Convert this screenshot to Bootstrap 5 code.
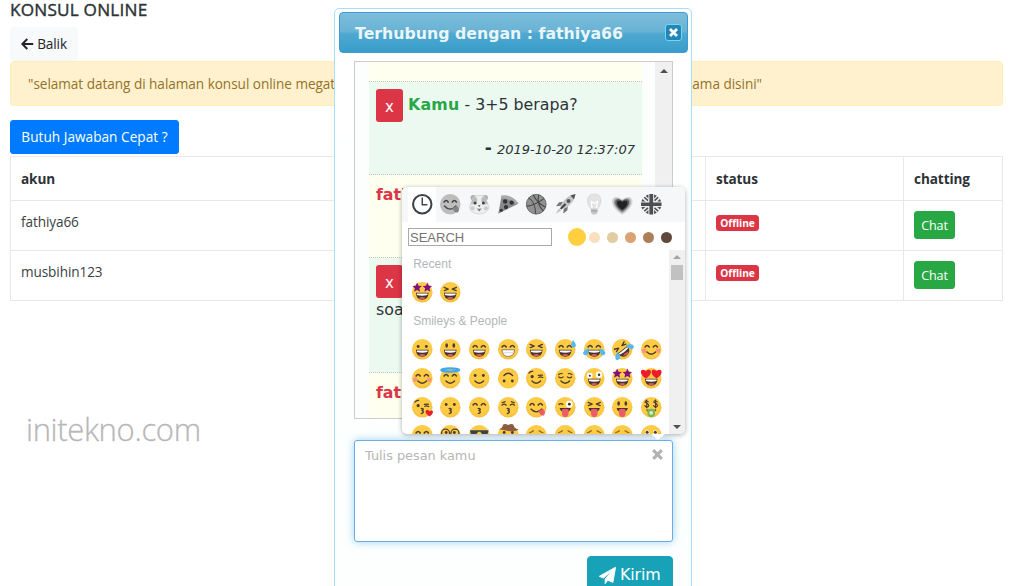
<!DOCTYPE html>
<html lang="id">
<head>
<meta charset="utf-8">
<meta name="viewport" content="width=device-width, initial-scale=1">
<title>Konsul Online</title>
<link href="https://cdn.jsdelivr.net/npm/bootstrap@5.3.0/dist/css/bootstrap.min.css" rel="stylesheet">
<style>
html{font-size:14.4px}
body{font-family:"Open Sans","Noto Sans",sans-serif;font-size:13.6px;line-height:21.6px;color:#2d3236;height:586px;overflow:hidden;position:relative;background:#fff}
.page{padding:0 21px 0 10px}
.page h1{font-size:17.2px;font-weight:500;line-height:21.6px;margin:-1px 0 6px;letter-spacing:.2px;-webkit-text-stroke:.4px}
.btn{font-size:13.6px;line-height:21.6px;padding:5.2px 10px;border-radius:3px;letter-spacing:-.1px}
.btn-back{background:#f8f9fa;border-color:#f8f9fa;width:68px;height:34px;white-space:nowrap}
.btn-ask{background:#007bff;border-color:#007bff;color:#fff;width:169px;height:34px;white-space:nowrap;letter-spacing:.04px}
.notice{background:#fff1cd;border:1px solid #ffeeba;color:#94722a;border-radius:4px;padding:11px 17px 10.4px;height:45px;margin-bottom:14px;white-space:nowrap;letter-spacing:-.04px}
.notice span:last-child{margin-right:223px}
.users{margin:2px 0 0;width:993px;table-layout:fixed;border-color:#e6e9ec;color:#2d3236}
.users th,.users td{padding:11px 10px 10px;line-height:21.6px;letter-spacing:-.1px}
.users td{color:#3a3f43;padding-top:10.5px}
.users thead tr{height:44px}.users tbody tr{height:50px}
.users .tag{display:block;width:43px;height:16px;border-radius:3.5px;background:#dc3545;color:#fff;font-weight:700;font-size:10.2px;line-height:16px;text-align:center;margin-top:4px;letter-spacing:-.05px}
.btn-chat{background:#28a745;border-color:#28a745;color:#fff;font-size:12.6px;line-height:18px;width:41px;height:28px;padding:5px 0 3px;border-radius:3px;display:block}
.watermark{font-size:31px;line-height:40px;font-weight:300;color:#b7b7b7;margin:108px 0 0 16px;letter-spacing:-.35px;-webkit-text-stroke:.3px}
.dialog{position:absolute;left:334px;top:8px;width:358px;height:600px;border:1.5px solid #a3e1f8;border-radius:5px;background:linear-gradient(#fff,#fcfffe);padding:3px 3px 3px 4px;font-family:"DejaVu Sans",sans-serif}
.dialog-head{height:41px;border:1px solid #4297d7;border-radius:4px;background:linear-gradient(#7dbedb 0,#68b2d4 48%,#4fa9d0 52%,#389dc9 100%);color:#eaf5f7;font-weight:700;font-size:15.75px;padding:0 5px 0 15px}
.dialog-head>span:first-child{padding-top:3px}
.dialog-close{width:17px;height:17px;border:1px solid #77d5f7;border-radius:3px;background:#2287b6}
.dialog-body{padding:8px 15px 0 15px}
.chat-log{height:358px;border:1px solid #ccc;padding-left:14px;overflow:hidden;background:#fcfefe}
.msgs{width:273px;font-size:15.8px;line-height:23px}
.msg{padding:7px;border-bottom:1px dotted #bfc3bd;position:relative;white-space:nowrap;overflow:hidden}
.msg.them{padding-top:8px}
.them{background:#fffff0}.mine{background:#ebf9f0}
.them b{color:#dc3545}.mine b{color:#28a745}
.btn-del{width:27px;height:33px;background:#dc3545;color:#fff;border-radius:3px;font-size:15px;display:inline-flex;align-items:center;justify-content:center;padding-top:2px;line-height:20px;vertical-align:-2px}
.btn-del+b{letter-spacing:.2px}
.stamp{text-align:right;font-size:13px;margin-top:15px}
.stamp span{font-size:17px;margin-right:1px;font-weight:700}
.sbar{width:17px;background:#f0f0f0}
.composer{margin-top:21px;height:102px;border:1px solid #66afe9;border-radius:3px;background:#fff;box-shadow:0 0 8px rgba(102,175,233,.6);padding:4px 9px 0 10px;font-size:12.85px;color:#b6b6b6}
.btn-send{background:#17a2b8;border-color:#17a2b8;color:#fff;width:86px;height:38px;margin-top:14px;font-size:15.9px;padding:0;border-radius:4px}
.picker{position:absolute;left:402px;top:187px;width:283px;height:247px;background:#fff;border-radius:5px;box-shadow:0 1px 5px rgba(0,0,0,.32);font-family:"Liberation Sans",sans-serif}
.picker:after{content:"";position:absolute;left:249px;top:247px;border:7px solid transparent;border-top:6px solid #fff;border-bottom:0}
.tabs{height:35px;background:#f5f7f9;border-radius:5px 5px 0 0;padding-left:5.7px}
.tabs span{width:28.65px;display:flex;align-items:center;justify-content:center}
.tabs span:first-child{background:#fff}
.tabs svg,.faces svg{width:20.5px;height:20.5px;display:block;overflow:visible}
.search-row{height:28px;padding:6px 13px 0 6px}
.search-box{width:144px;height:18px;border:1px solid #a9a9a9;font-size:13px;line-height:17px;color:#757575;padding-left:1px;border-radius:0}
.tone{width:11px;height:11px;border-radius:50%}
.tone-on{width:18px;height:18px}
.scroll{height:184px;overflow:hidden;border-radius:0 0 5px 5px}
.group-name{font-size:12px;line-height:29px;height:28.4px;color:#b2b6b8;padding-left:5.5px}
.faces{display:grid;grid-template-columns:repeat(9,28.65px);grid-auto-rows:28.65px;place-items:center}
.pbar{width:16px;background:#f0f0f0;padding:5px 0 5px}
</style>
</head>
<body>
<svg width="0" height="0" class="position-absolute" aria-hidden="true">
<defs>
<radialGradient id="skin" cx=".5" cy=".45" r=".55"><stop offset=".75" stop-color="#fecb44"/><stop offset="1" stop-color="#f6b93a"/></radialGradient>
<g id="f"><circle cx="10" cy="10" r="10" fill="url(#skin)"/></g>
<g id="eD" fill="#4a3c30"><circle cx="6" cy="7.3" r="1.4"/><circle cx="14" cy="7.3" r="1.4"/></g>
<g id="eT" fill="#4a3c30"><ellipse cx="6.5" cy="6.3" rx="1.3" ry="2.2"/><ellipse cx="13.5" cy="6.3" rx="1.3" ry="2.2"/></g>
<g id="eH" fill="none" stroke="#4a3c30" stroke-width="1.5" stroke-linecap="round"><path d="M4 7.8Q6 4.8 8 7.8M12 7.8Q14 4.8 16 7.8"/></g>
<g id="eC" fill="none" stroke="#4a3c30" stroke-width="1.2" stroke-linecap="round"><path d="M3.8 8.7Q6 10.5 8 8.7M12 8.7Q14 10.5 16.2 8.7M3.6 6.4Q5 5.2 7 5.4M16.4 6.4Q15 5.2 13 5.4"/></g>
<g id="eX" fill="none" stroke="#4a3c30" stroke-width="1.3" stroke-linecap="round" stroke-linejoin="round"><path d="M4 5.3L8 7L4.2 8.3M16 5.3L12 7L15.8 8.3"/></g>
<g id="eK" fill="none" stroke="#4a3c30" stroke-width="1.2" stroke-linecap="round"><path d="M4 8Q6 6 8 8M12 8Q14 6 16 8M4 5.6L7 4.5M16 5.6L13 4.5"/></g>
<g id="eW" fill="none" stroke="#4a3c30" stroke-width="1.2" stroke-linecap="round"><path d="M12 7.3L16 7M12.4 9.2Q14 8 16.3 9.3M2.8 5Q4.5 2.8 6.5 3.3"/><circle cx="6" cy="8.4" r="1" fill="#4a3c30"/></g>
<g id="eZ"><circle cx="5.5" cy="7.5" r="2.8" fill="#fff"/><circle cx="14.7" cy="6.5" r="3.2" fill="#fff"/><circle cx="5.7" cy="7.6" r="1" fill="#333"/><circle cx="14.7" cy="6.6" r="1.2" fill="#333"/></g>
<g id="eP"><path d="M3.5 7.6Q5.8 5.3 8 7.6" fill="none" stroke="#4a3c30" stroke-width="1.3"/><circle cx="14" cy="7" r="3.3" fill="#fff"/><circle cx="14" cy="7" r="1.4" fill="#333"/></g>
<path id="star" d="M0-4.6L1.4-1.6L4.6-1.2L2.2 1L2.9 4.2L0 2.6L-2.9 4.2L-2.2 1L-4.6-1.2L-1.4-1.6Z"/>
<path id="heart" d="M0 4.2C-7-.2-4.2-5.5 0-2.1C4.2-5.5 7-.2 0 4.2Z"/>
<g id="eS" fill="#820f82"><use href="#star" x="5" y="5.2"/><use href="#star" x="15" y="5.2"/></g>
<g id="eL" fill="#ed1c2c"><use href="#heart" transform="translate(4.8 5.4) scale(1.15)"/><use href="#heart" transform="translate(15.2 5.4) scale(1.15)"/></g>
<g id="eM" fill="none" stroke="#4a3c30" stroke-width="1.1"><path d="M7.6 5Q4 2.2 4 5.2Q8.5 7.3 7.3 9Q5 11 3.6 8M5.6 2.5V11M16.2 5Q12.6 2.2 12.6 5.2Q17 7.3 15.8 9Q13.5 11 12.1 8M14.2 2.5V11"/></g>
<g id="eO"><circle cx="6" cy="7.3" r="2.2" fill="#fff"/><circle cx="14" cy="7.3" r="2.2" fill="#fff"/><circle cx="6" cy="7" r="1.5" fill="#4a3c30"/><circle cx="14" cy="7" r="1.5" fill="#4a3c30"/></g>
<g id="eB" fill="none" stroke="#8a6a2e" stroke-width="1.2" stroke-linecap="round"><path d="M3.5 7.6Q5.5 6.8 7.3 5.6M16.5 7.6Q14.5 6.8 12.7 5.6"/></g>
<g id="mG"><path d="M3.8 10.5H16.2Q15.8 17.3 10 17.3T3.8 10.5Z" fill="#44342d"/><path d="M4.8 11.3H15.2V12.7Q10 13.9 4.8 12.7Z" fill="#fff"/><path d="M6.6 15.5Q10 13.9 13.4 15.5Q10 18.2 6.6 15.5Z" fill="#df5b63"/></g>
<g id="mB"><path d="M3.8 10.5H16.2Q15.8 17 10 17T3.8 10.5Z" fill="#fff" stroke="#776a58" stroke-width=".8"/><path d="M4.5 13.4H15.5" stroke="#bbb" stroke-width=".6"/></g>
<path id="mS" d="M5.8 12.7Q10 17 14.2 12.7" fill="none" stroke="#4a3c30" stroke-width="1.4" stroke-linecap="round"/>
<path id="mK" d="M9 11.2Q12.6 11.5 10 13.3Q12.6 15 9 16.2" fill="none" stroke="#4a3c30" stroke-width="1.3" stroke-linecap="round"/>
<g id="mT"><path d="M4.5 10.8H15.5Q14.5 15 10 15T4.5 10.8Z" fill="#44342d"/><path d="M6.8 12Q10 10.7 13.2 12V16.5Q12.5 19.5 10 19.5T6.8 16.5Z" fill="#ec5c66"/></g>
<g id="mY"><path d="M4.5 11.5Q10 17.5 16 11.5" fill="none" stroke="#4a3c30" stroke-width="1.4"/><path d="M12 14L16.5 11.5Q20 15 17.5 18Q14 18.8 12 14Z" fill="#ec5c66"/></g>
<g id="bl" fill="#f9957b"><circle cx="3.2" cy="11.5" r="2.2"/><circle cx="16.8" cy="11.5" r="2.2"/></g>
<g id="tears" fill="#55b9ef"><path d="M4.8 9Q-.8 11-1 14Q0 16.8 3 15.5Q4.6 14 4.8 9ZM15.2 9Q20.8 11 21 14Q20 16.8 17 15.5Q15.4 14 15.2 9Z"/></g>
<path id="drop" d="M17.5 1Q22 6 19.5 8Q17 9 16 7Q15.5 5 17.5 1Z" fill="#55b9ef"/>
<g id="halo" fill="none" stroke="#3fa9ec"><ellipse cx="10" cy="2" rx="8.7" ry="1.6" stroke-width="2.2"/></g>
<g id="gl" fill="none" stroke="#4a4038" stroke-width="1.3"><circle cx="5.4" cy="8" r="3.9"/><circle cx="14.6" cy="8" r="3.9"/></g>
<path id="sun" d="M.8 5H19.2L18 9Q13.5 11 11 6.5H9Q6.5 11 2 9Z" fill="#39434a"/>
<path id="hat" d="M0 4Q4 4.3 5-.5Q7-1.5 10 0Q13-1.5 15-.5Q16 4.3 20 4Q18 7 10 5.8T0 4Z" fill="#8a5d43"/>
<path id="ht" d="M17 19Q11 14.5 14.3 12.6Q16 12.2 17 14Q18.8 12.4 20.2 13.7Q21.5 16 17 19Z" fill="#e5202e"/>
<g id="cash"><path d="M6.3 12Q10 10.7 13.7 12V17Q12.5 19.8 10 19.8T6.3 17Z" fill="#78b856"/><circle cx="10" cy="15.5" r="1.8" fill="#d9edc0"/></g>
<g id="arrow"><path d="M0 4L4 0L8 4Z"/></g>
</defs>
</svg>

<main class="page">
  <h1>KONSUL ONLINE</h1>
  <a class="btn btn-back d-flex align-items-center" href="#"><svg class="me-1" width="13" height="12" viewBox="0 0 13 12" fill="none" stroke="#212529" stroke-width="2"><path d="M6.5.8L1.4 6L6.5 11.2M1.5 6H12.7"/></svg>Balik</a>
  <div class="notice d-flex justify-content-between"><span>"selamat datang di halaman konsul online megat</span><span>ama disini"</span></div>
  <button class="btn btn-ask d-block">Butuh Jawaban Cepat ?</button>
  <table class="table table-bordered users">
    <colgroup><col style="width:695px"><col style="width:198px"><col style="width:99px"></colgroup>
    <thead><tr><th>akun</th><th>status</th><th>chatting</th></tr></thead>
    <tbody>
      <tr><td>fathiya66</td><td><span class="tag">Offline</span></td><td><button class="btn btn-chat">Chat</button></td></tr>
      <tr><td>musbihin123</td><td><span class="tag">Offline</span></td><td><button class="btn btn-chat">Chat</button></td></tr>
    </tbody>
  </table>
  <div class="watermark">initekno.com</div>
</main>

<section class="dialog">
  <header class="dialog-head d-flex align-items-center justify-content-between">
    <span>Terhubung dengan : fathiya66</span>
    <span class="dialog-close d-flex align-items-center justify-content-center"><svg width="9" height="9" viewBox="0 0 9 9" stroke="#fff" stroke-width="2.8"><path d="M1 1L8 8M8 1L1 8"/></svg></span>
  </header>
  <div class="dialog-body">
    <div class="chat-log d-flex justify-content-between">
      <div class="msgs">
        <div class="msg them" style="height:20px"></div>
        <div class="msg mine" style="height:93px"><span class="btn-del">x</span> <b>Kamu</b> - 3+5 berapa?<div class="stamp"><span>-</span> <em>2019-10-20 12:37:07</em></div></div>
        <div class="msg them" style="height:83px"><b>fathiya66</b></div>
        <div class="msg mine" style="height:115px"><span class="btn-del">x</span><div>soa</div></div>
        <div class="msg them" style="height:50px"><b>fathiya66</b></div>
      </div>
      <div class="sbar text-center"><svg class="d-block mx-auto mt-2" width="8" height="4" fill="#505050"><use href="#arrow"/></svg></div>
    </div>
    <div class="composer d-flex justify-content-between"><span>Tulis pesan kamu</span><svg class="mt-1" width="11" height="11" viewBox="0 0 9 9" stroke="#b3b3b3" stroke-width="2.6"><path d="M1 1L8 8M8 1L1 8"/></svg></div>
    <button class="btn btn-send d-flex align-items-center justify-content-center ms-auto"><svg class="me-1" width="17" height="17" viewBox="0 0 17 17"><path d="M16.6.2L.3 9.3L4.3 11.1L13.8 3.1L6.2 12V16.6L8.7 13.2L13.9 15.4Z" fill="#fff" stroke="#fff" stroke-width=".9" stroke-linejoin="round"/></svg>Kirim</button>
  </div>
</section>

<aside class="picker">
  <div class="tabs d-flex">
    <span><svg viewBox="0 0 20 20"><circle cx="10" cy="10" r="9" fill="none" stroke="#3e4347" stroke-width="2"/><path d="M10 3.5V10.5H15" fill="none" stroke="#3e4347" stroke-width="1.4"/></svg></span>
    <span><svg viewBox="0 0 20 20"><circle cx="10" cy="10" r="10" fill="#bdbdbd"/><use href="#eH"/><path d="M4 11.5Q10 18 16 11.5" fill="none" stroke="#444" stroke-width="1.4"/><path d="M12 14L16.5 11.5Q20 15 17.5 18Q14 18.8 12 14Z" fill="#858585"/></svg></span>
    <span><svg viewBox="0 0 20 20"><circle cx="4.3" cy="3.7" r="2.7" fill="#a9a9a9"/><circle cx="15.7" cy="3.7" r="2.7" fill="#a9a9a9"/><path d="M4 3Q10-.5 16 3L19.5 13Q18 19.5 10 19.5T.5 13Z" fill="#eee" stroke="#ccc" stroke-width=".7"/><path d="M4 3Q8 1.5 8 7L5 10L1.8 10ZM16 3Q12 1.5 12 7L15 10L18.2 10Z" fill="#bbb"/><g fill="#444"><circle cx="6" cy="8.8" r="1.5"/><circle cx="14" cy="8.8" r="1.5"/><path d="M8.7 11H11.3L10 12.7Z"/></g><circle cx="3.5" cy="14" r="2" fill="#ccc"/><circle cx="16.5" cy="14" r="2" fill="#ccc"/><path d="M7.5 14Q10 15 12.5 14L10 17Z" fill="#777"/></svg></span>
    <span><svg viewBox="0 0 20 20"><path d="M3.5 2Q12 1 19.8 9.4L.2 19.2Z" fill="#8a8a8a"/><path d="M3.2 1.5Q13 0 20 8.8L18.5 10.3Q12 4 2.8 4.4Z" fill="#aaa"/><g fill="#333"><circle cx="7" cy="7.3" r="2.2"/><circle cx="13.3" cy="8.5" r="2.1"/><circle cx="7.8" cy="12.8" r="2.1"/><circle cx="3.2" cy="15.8" r="1.5"/></g></svg></span>
    <span><svg viewBox="0 0 20 20"><circle cx="10" cy="10" r="9.6" fill="#919191" stroke="#555" stroke-width=".8"/><path d="M2.5 4Q9 7 9.5 19.5M7 .8Q11 9 19 13M.5 12Q9 11 17.5 4.5M12.5.7Q10 10 17 16.5" fill="none" stroke="#444" stroke-width="1"/></svg></span>
    <span><svg viewBox="0 0 20 20"><path d="M8 7.5L4 8L1 12L5.5 11.5ZM12.5 12L12 16L8 19L8.5 14.5Z" fill="#777"/><path d="M20 0Q13 .5 7 8.5L5.5 12.2L7.8 14.5L11.8 13Q19.5 7 20 0Z" fill="#c4c4c4"/><path d="M20 0L15 1.5L18.5 5Z" fill="#555"/><circle cx="13.2" cy="6.8" r="1.9" fill="#555"/><path d="M4 14L.5 19.5L6 16Z" fill="#c4c4c4"/><path d="M9.5 9L4.8 13.8L6.3 15.2L11 10.5Z" fill="#444"/></svg></span>
    <span><svg viewBox="0 0 20 20"><path d="M3.4 7Q3.6 0 10 0T16.6 7Q16.6 9.5 13.4 14.5H6.6Q3.4 9.5 3.4 7Z" fill="#e3e3e3" stroke="#cfcfcf" stroke-width=".6"/><path d="M7.8 14L7 7.5L10 9L13 7.5L12.2 14" fill="none" stroke="#fff" stroke-width="1.2"/><path d="M6.8 14.5H13.2V18L11.5 20H8.5L6.8 18Z" fill="#c6c6c6"/><path d="M6.8 16.5H13.2" stroke="#999"/></svg></span>
    <span><svg viewBox="0 0 20 20"><g transform="translate(10 10.3)"><use href="#heart" transform="scale(2.35)" fill="#d6d6d6"/><use href="#heart" transform="scale(1.95)" fill="#a2a2a2"/><use href="#heart" transform="scale(1.6)" fill="#5c5c5c"/><use href="#heart" transform="scale(1.2)" fill="#222"/></g></svg></span>
    <span><svg viewBox="0 0 20 20"><circle cx="10" cy="10" r="10" fill="#ededed"/><path d="M3.2 3.2L6.8 6.4M16.8 3.2L13.2 6.4M3.2 16.8L6.8 13.6M16.8 16.8L13.2 13.6" stroke="#4b4f52" stroke-width="1.5"/><path d="M4.6 1.6L7.2.4V4.5ZM15.4 1.6L12.8.4V4.5ZM4.6 18.4L7.2 19.6V15.5ZM15.4 18.4L12.8 19.6V15.5ZM1.5 4.8L.4 7.2H4.2ZM18.5 4.8L19.6 7.2H15.8ZM1.5 15.2L.4 12.8H4.2ZM18.5 15.2L19.6 12.8H15.8Z" fill="#4b4f52"/><path d="M10 0V20M0 10H20" stroke="#4b4f52" stroke-width="3.6"/></svg></span>
  </div>
  <div class="search-row d-flex justify-content-between">
    <div class="search-box">SEARCH</div>
    <div class="d-flex align-items-center" style="height:18px;gap:7px">
      <i class="tone tone-on" style="background:#ffcf3e;margin-right:-3.5px"></i><i class="tone" style="background:#f9e0c1"></i><i class="tone" style="background:#e0cda1"></i><i class="tone" style="background:#dba373"></i><i class="tone" style="background:#ad7f57"></i><i class="tone" style="background:#60493a"></i>
    </div>
  </div>
  <div class="scroll d-flex justify-content-between">
    <div style="padding-left:5.7px">
      <div class="group-name">Recent</div>
      <div class="faces" data-set="recent"></div>
      <div class="group-name">Smileys &amp; People</div>
      <div class="faces" data-set="people"></div>
    </div>
    <div class="pbar d-flex flex-column align-items-center"><svg width="8" height="4" fill="#a3a3a3"><use href="#arrow"/></svg><div style="width:12px;height:15px;background:#c1c1c1;margin-top:6px"></div><svg class="mt-auto" width="8" height="4" fill="#505050"><path d="M0 0H8L4 4Z"/></svg></div>
  </div>
</aside>

<script>
// Each face is a list of the parts it is layered from.
const sets = {
  recent: ['f eS mG', 'f eX mG'],
  people: [
    'f eD mG', 'f eT mG', 'f eH mG', 'f eH mB', 'f eX mG', 'f eH mG drop', 'f eH mG tears', 'r f eX mG tears', 'f bl eH mS',
    'f bl eH mS', 'f eH mS halo', 'f eD mS', 'u f eD mS', 'f eW mS', 'f eC mS', 'f eZ mG', 'f eS mG', 'f eL mG',
    'f eW mK ht', 'f eD mK', 'f eH mK', 'f eK mK', 'f eH mY', 'f eP mT', 'f eX mT', 'f eT mT', 'f eM mS cash',
    'f bl eH mS', 'f gl eD mS', 'f sun mS', 'f eD mS hat', 'f eB mS', 'f eB mS', 'f eB mS', 'f eB mS', 'f eO mS'
  ]
};
const turn = { r: 'rotate(-38 10 10)', u: 'rotate(180 10 10)' };
document.querySelectorAll('.faces').forEach(box => {
  box.innerHTML = sets[box.dataset.set].map(face => {
    const parts = face.split(' ');
    const t = turn[parts[0]] ? ` transform="${turn[parts.shift()]}"` : '';
    return `<svg viewBox="0 0 20 20"><g${t}>${parts.map(p => `<use href="#${p}"/>`).join('')}</g></svg>`;
  }).join('');
});
</script>
<script src="https://cdn.jsdelivr.net/npm/bootstrap@5.3.0/dist/js/bootstrap.bundle.min.js"></script>
</body>
</html>
